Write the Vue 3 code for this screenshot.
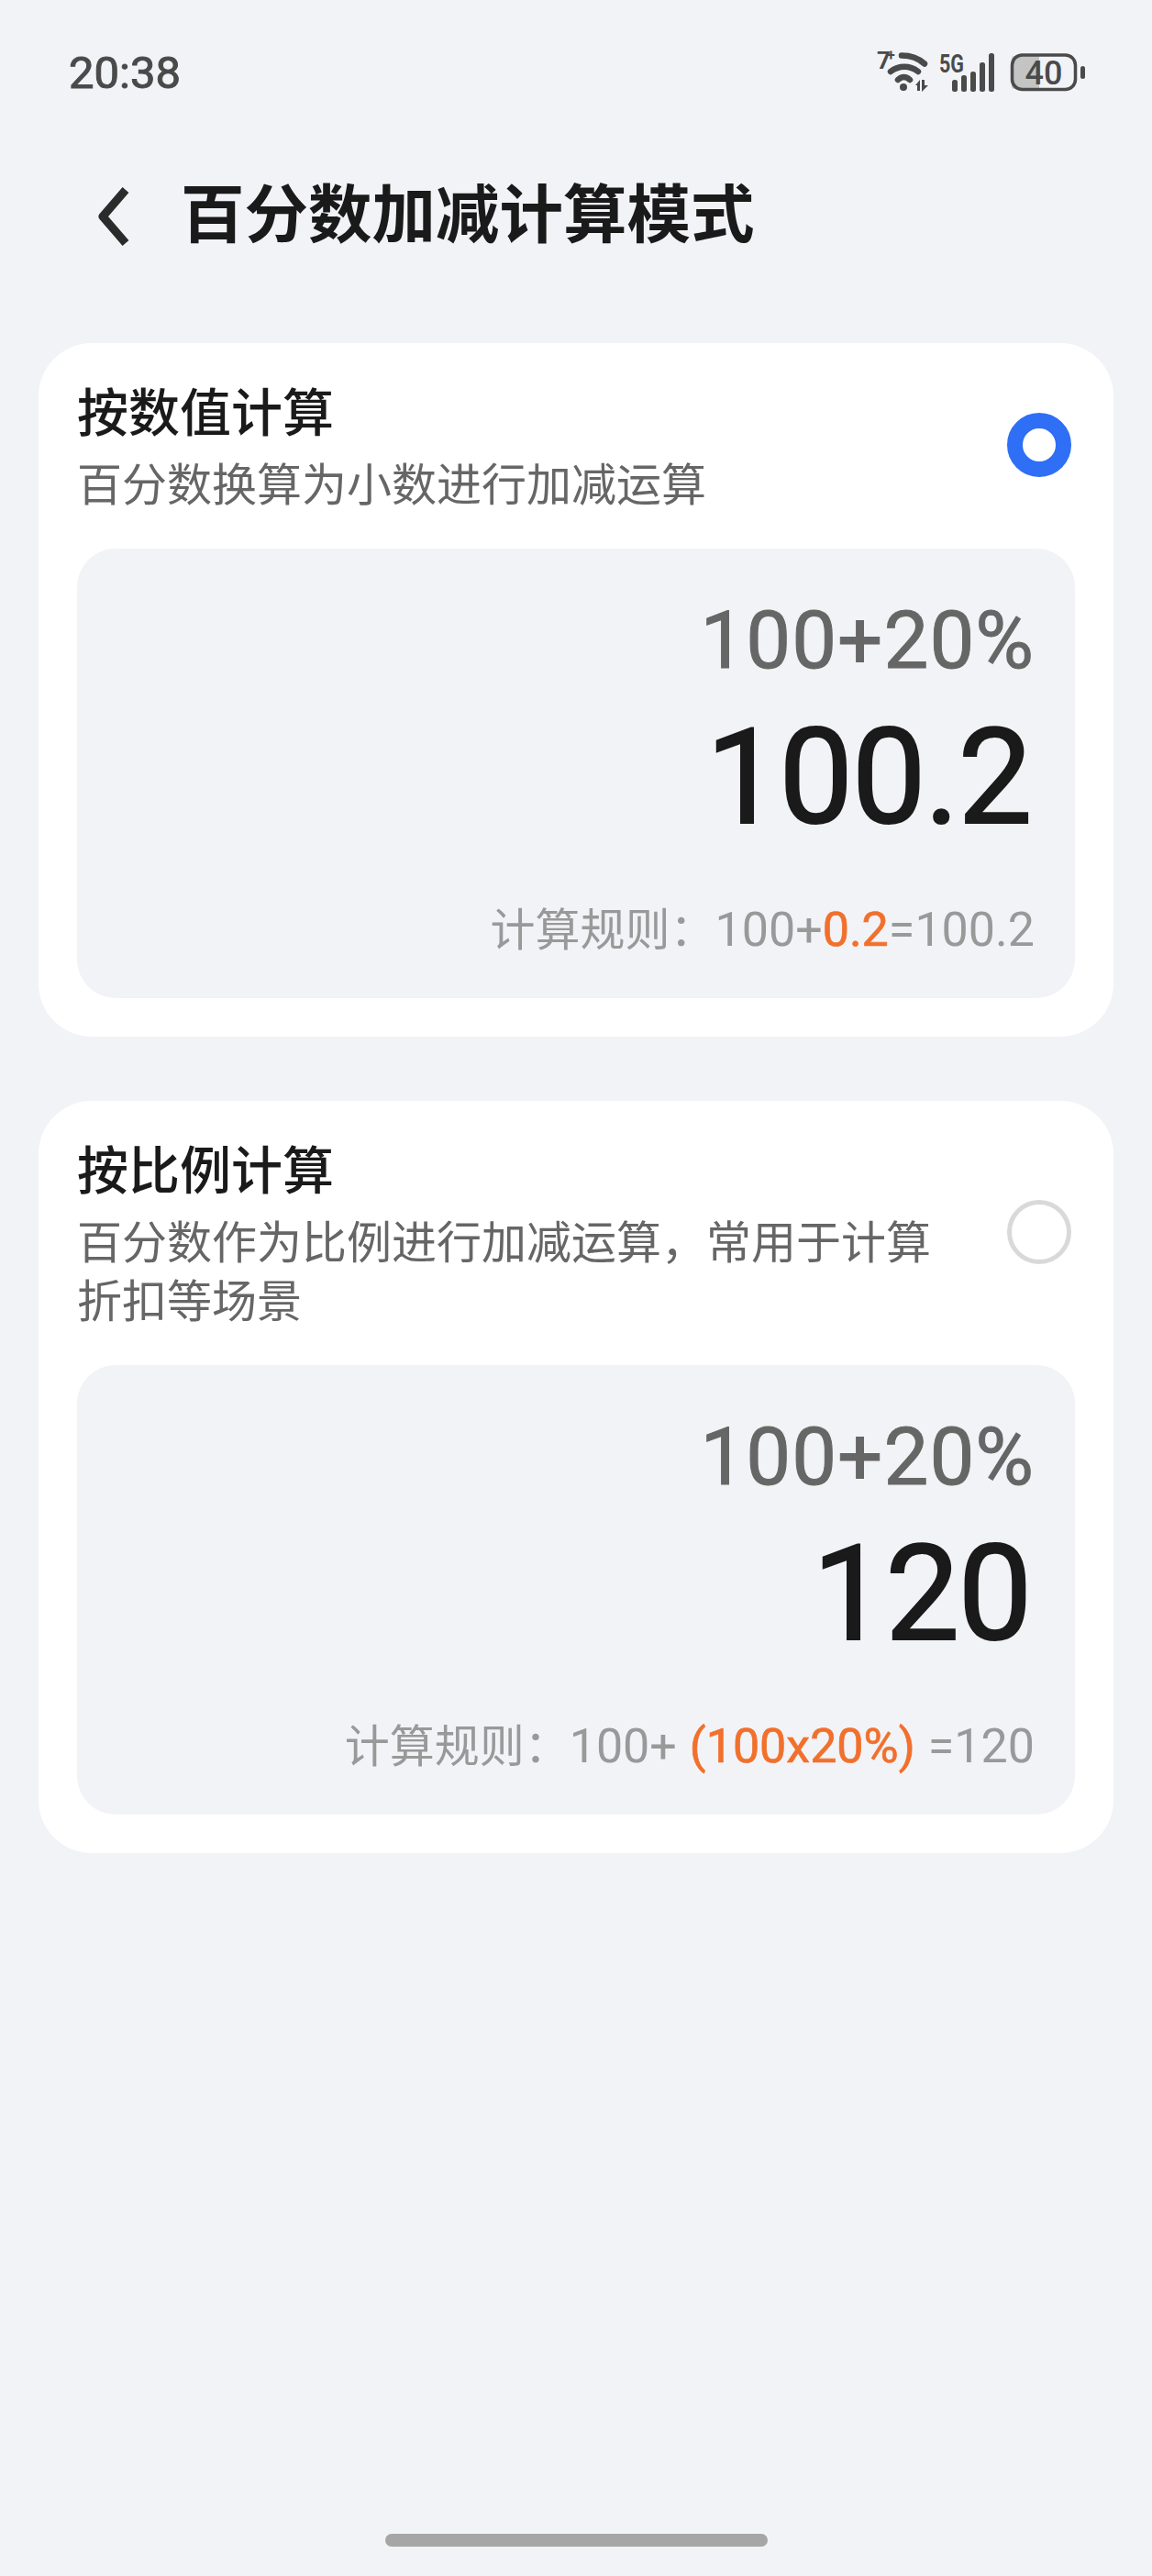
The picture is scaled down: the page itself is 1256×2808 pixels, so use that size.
<script setup>
const modes = [
  {
    title: "按数值计算",
    desc: "百分数换算为小数进行加减运算",
    selected: true,
    result: "100.2",
    rulePre: "100+",
    ruleKey: "0.2",
    rulePost: "=100.2",
    spaced: false,
  },
  {
    title: "按比例计算",
    desc: "百分数作为比例进行加减运算，常用于计算折扣等场景",
    selected: false,
    result: "120",
    rulePre: "100+",
    ruleKey: "(100x20%)",
    rulePost: "=120",
    spaced: true,
  },
]
</script>

<template>
  <div class="page">
    <div class="status">
      <span class="time">20:38</span>
      <svg class="status-icons" width="240" height="80" viewBox="950 39 240 80">
        <text x="956" y="75" class="net">7</text>
        <text x="967" y="66" class="net small">+</text>
        <g fill="none" stroke="#4a4a4a" stroke-linecap="round">
          <path d="M983 60.500 C993 60.500 1002 64 1008 69.500" stroke-width="6.500" />
          <path d="M971 78 C980 71 992 71 1001 78" stroke-width="6.500" />
          <path d="M979 87 C983 83 988 83 992 87" stroke-width="6.500" />
        </g>
        <circle cx="985" cy="95" r="4" fill="#4a4a4a" />
        <path d="M998 93 L1003 87 V99 H1000 V93z M1005 87 H1008 V93 H1012 L1005 100z" fill="#4a4a4a" />
        <text x="1024" y="79" class="net tall" textLength="27" lengthAdjust="spacingAndGlyphs">5G</text>
        <g fill="#4a4a4a">
          <rect x="1038" y="87" width="6" height="13" rx="2.500" />
          <rect x="1048" y="82" width="6" height="18" rx="2.500" />
          <rect x="1058" y="78" width="6" height="22" rx="2.500" />
          <rect x="1068" y="68" width="6" height="32" rx="2.500" />
          <rect x="1078" y="58" width="6" height="42" rx="2.500" />
        </g>
        <path d="M1106 61 h27 v36 h-27 a3 3 0 0 1-3-3 v-30 a3 3 0 0 1 3-3z" fill="#c4c4c4" />
        <rect x="1103.500" y="60" width="69" height="37.500" rx="11" fill="none" stroke="#4a4a4a" stroke-width="3.500" />
        <rect x="1178" y="72" width="5" height="14" rx="2.500" fill="#4a4a4a" />
        <text x="1138" y="92" text-anchor="middle" class="batt">40</text>
      </svg>
    </div>

    <div class="header">
      <svg class="back" width="36" height="66" viewBox="0 0 36 66">
        <path d="M31 4 L6 33 L31 62" fill="none" stroke="#2b2b2b" stroke-width="9" stroke-linejoin="round" />
      </svg>
      <h1 class="heading">百分数加减计算模式</h1>
    </div>

    <div class="cards">
      <section v-for="m in modes" :key="m.title" class="card">
        <div class="head">
          <div class="head-text">
            <div class="title">{{ m.title }}</div>
            <div class="desc">{{ m.desc }}</div>
          </div>
          <span class="radio" :class="{ on: m.selected }"></span>
        </div>
        <div class="demo">
          <div class="expr">100+20%</div>
          <div class="result">{{ m.result }}</div>
          <div class="rule">
            计算规则：<span class="rule-num">{{ m.rulePre }}</span><span class="key" :class="{ spaced: m.spaced }">{{ m.ruleKey }}</span><span class="rule-num">{{ m.rulePost }}</span>
          </div>
        </div>
      </section>
    </div>

    <div class="home-bar"></div>
  </div>
</template>

<style>
html, body {
  margin: 0;
  background: #f2f3f7;
}
</style>

<style scoped>
.page {
  min-height: 2808px;
  box-sizing: border-box;
  display: flex;
  flex-direction: column;
  background: #f2f3f7;
  font-family: Roboto, "Noto Sans CJK SC", sans-serif;
  color: #1a1a1a;
  overflow: hidden;
}
.status {
  height: 158px;
  display: flex;
  align-items: center;
  justify-content: space-between;
  padding: 0 66px 0 75px;
}
.time {
  font-size: 49px;
  color: #4a4a4a;
  -webkit-text-stroke: 1px #4a4a4a;
}
.status-icons {
  display: block;
}
.net {
  font: 700 26px Roboto, sans-serif;
  fill: #4a4a4a;
}
.small {
  font-size: 16px;
}
.tall {
  font-size: 28px;
}
.batt {
  font: 500 36px Roboto, sans-serif;
  fill: #4a4a4a;
}
.header {
  height: 154px;
  box-sizing: border-box;
  padding-top: 2px;
  display: flex;
  align-items: center;
  padding-left: 106px;
}
.back {
  display: block;
}
.heading {
  margin: 0 0 0 55px;
  font-size: 69.5px;
  font-weight: 700;
  line-height: 1;
}
.cards {
  margin-top: 62px;
  padding: 0 42px;
  display: flex;
  flex-direction: column;
  gap: 70px;
}
.card {
  background: #fff;
  border-radius: 58px;
  padding: 39px 42px 42px;
}
.head {
  display: flex;
  align-items: center;
  justify-content: space-between;
  padding-right: 4px;
}
.head-text {
  width: 950px;
}
.title {
  font-size: 56px;
  font-weight: 500;
  line-height: 76px;
}
.desc {
  margin-top: 9px;
  font-size: 49px;
  line-height: 64px;
  color: #666;
}
.radio {
  width: 70px;
  height: 70px;
  margin-bottom: 6px;
  box-sizing: border-box;
  border-radius: 50%;
  border: 5px solid #d9d9d9;
}
.radio.on {
  border: 17px solid #2f6ff6;
}
.demo {
  margin-top: 36px;
  background: #f2f3f7;
  border-radius: 42px;
  padding: 50px 44px 41px;
  text-align: right;
}
.expr {
  font-size: 87px;
  line-height: 100px;
  letter-spacing: 1px;
  color: #666;
  -webkit-text-stroke: 1px #666;
}
.result {
  margin-top: 20px;
  padding-right: 4px;
  font-size: 144px;
  line-height: 160px;
  letter-spacing: -1.500px;
  color: #1a1a1a;
  -webkit-text-stroke: 2px #1a1a1a;
}
.rule {
  margin-top: 54px;
  font-size: 49px;
  line-height: 64px;
  color: #999;
}
.rule-num {
  font-size: 52px;
}
.key {
  color: #f1702c;
  font-size: 52px;
  -webkit-text-stroke: 0.7px #f1702c;
}
.key.spaced {
  margin: 0 14px;
}
.home-bar {
  margin: auto auto 32px;
  width: 417px;
  height: 14px;
  border-radius: 7px;
  background: #a6a6a6;
}
</style>
